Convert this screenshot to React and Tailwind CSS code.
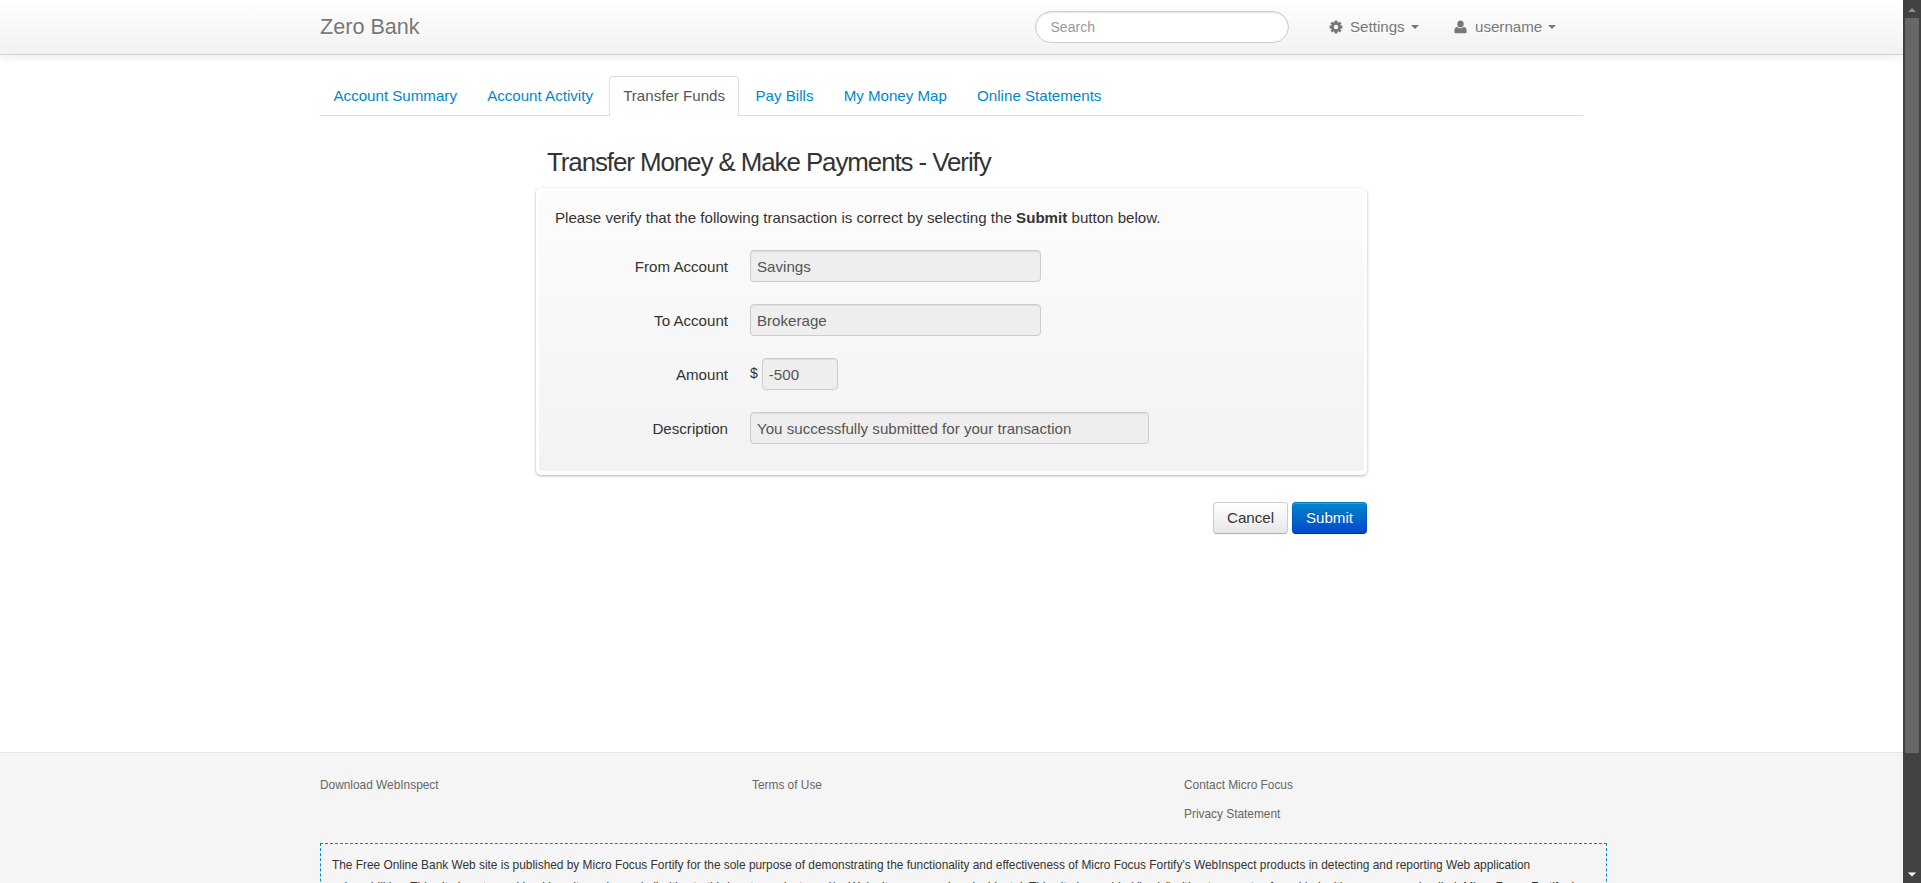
import React from "react";

const tabs = ["Account Summary", "Account Activity", "Transfer Funds", "Pay Bills", "My Money Map", "Online Statements"];

const toothAngles = [0, 45, 90, 135];

function Cog() {
  return (
    <svg className="h-[14px] w-[14px]" viewBox="0 0 14 14" fill="none">
      {toothAngles.map((a) => (
        <rect key={a} x="5.550" y="0.500" width="2.900" height="13" rx="0.400" fill="#777" transform={`rotate(${a} 7 7)`} />
      ))}
      <circle cx="7" cy="7" r="4.900" fill="#777" />
      <circle cx="7" cy="7" r="2.200" fill="#f8f8f8" />
    </svg>
  );
}

function User() {
  return (
    <svg className="h-[14px] w-[13px]" viewBox="0 0 13 14" fill="#777">
      <ellipse cx="6.500" cy="4" rx="3.200" ry="3.500" />
      <path d="M3.300 6.900C1.400 7.200 0.500 8.200 0.400 10.200v1.600c0 1 .5 1.500 1.400 1.500h9.400c.9 0 1.400-.5 1.400-1.500v-1.600c-.1-2-1-3-2.900-3.300C8.900 7.800 7.800 8.300 6.500 8.300S4.100 7.800 3.300 6.900z" />
    </svg>
  );
}

function Caret() {
  return <span className="block h-0 w-0 border-x-[4px] border-t-[4px] border-x-transparent border-t-[#777]" />;
}

function Row({ label, children }) {
  return (
    <div className="flex h-8 items-center">
      <label className="mr-[22px] w-[173px] pt-[2px] text-right">{label}</label>
      {children}
    </div>
  );
}

const inputClass =
  "h-8 rounded-[4px] border border-[#ccc] bg-[#eee] px-[6px] text-[#555] shadow-[inset_0_1px_1px_rgba(0,0,0,0.075)] outline-none";

export default function App() {
  return (
    <div className="flex h-[883px] w-[1921px] overflow-hidden bg-white font-['Liberation_Sans',Arial,sans-serif] text-[15.120px] leading-[22px] text-[#333]">
      <div className="flex w-[1903px] flex-col">
        <header className="relative h-[55px] shrink-0 border-b border-[#d4d4d4] bg-linear-to-b from-white to-[#f2f2f2] shadow-[0_1px_10px_rgba(0,0,0,0.1)]">
          <div className="mx-auto flex h-[54px] w-[1263px] items-center text-[#777] [text-shadow:0_1px_0_#fff]">
            <a className="text-[21.600px]">Zero Bank</a>
            <input
              placeholder="Search"
              className="ml-auto h-8 w-[254px] rounded-[16px] border border-[#ccc] bg-white px-[14.500px] text-[14.040px] shadow-[inset_0_1px_2px_rgba(0,0,0,0.1)] outline-none placeholder:text-[#999]"
            />
            <div className="ml-[40px] flex w-[125px] items-center">
              <Cog />
              <span className="ml-[7px] mr-[6px]">Settings</span>
              <Caret />
            </div>
            <div className="flex w-[129px] items-center">
              <User />
              <span className="ml-[8px] mr-[6px]">username</span>
              <Caret />
            </div>
          </div>
        </header>

        <main className="flex h-[697px] shrink-0 flex-col">
          <nav className="mx-auto mt-[21px] flex h-[40px] w-[1263px] border-b border-[#ddd] text-[#0088cc]">
            {tabs.map((t) =>
              t === "Transfer Funds" ? (
                <a key={t} className="mr-[2.500px] h-[40px] rounded-t-[4px] border border-b-0 border-[#ddd] bg-white px-[13px] pt-[8px] text-[#555]">
                  {t}
                </a>
              ) : (
                <a key={t} className="mr-[2.200px] px-[14px] pt-[9px] first:pl-[13.500px]">
                  {t}
                </a>
              )
            )}
          </nav>

          <section className="mx-auto mt-[27px] w-[831px]">
            <h2 className="h-[45px] pl-[11px] text-[25.920px] leading-[38px] tracking-[-1.080px]">
              Transfer Money &amp; Make Payments - Verify
            </h2>
            <div className="h-[287px] rounded-[5px] bg-white px-[3px] pt-[3px] pb-[4px] shadow-[0_1px_3px_rgba(0,0,0,0.3)]">
              <div className="flex h-full flex-col rounded-[3px] bg-linear-to-b from-[#fcfcfc] to-[#f2f2f2] px-[16px] pt-[16px]">
                <p>
                  Please verify that the following transaction is correct by selecting the <strong>Submit</strong> button below.
                </p>
                <div className="mt-[21px] flex flex-col gap-[22px]">
                  <Row label="From Account">
                    <input readOnly value="Savings" className={`${inputClass} w-[291px]`} />
                  </Row>
                  <Row label="To Account">
                    <input readOnly value="Brokerage" className={`${inputClass} w-[291px]`} />
                  </Row>
                  <Row label="Amount">
                    <span className="mr-[4px] pb-[2px] text-[14.040px]">$</span>
                    <input readOnly value="-500" className={`${inputClass} w-[76px]`} />
                  </Row>
                  <Row label="Description">
                    <input readOnly value="You successfully submitted for your transaction" className={`${inputClass} w-[399px]`} />
                  </Row>
                </div>
              </div>
            </div>
            <div className="mt-[27px] flex justify-end gap-[4px]">
              <button className="h-8 w-[75px] rounded-[4px] border border-[#ccc] border-b-[#b3b3b3] bg-linear-to-b from-white to-[#e6e6e6] shadow-[inset_0_1px_0_rgba(255,255,255,0.2),0_1px_2px_rgba(0,0,0,0.05)] [text-shadow:0_1px_1px_rgba(255,255,255,0.75)]">
                Cancel
              </button>
              <button className="h-8 w-[75px] rounded-[4px] border border-black/10 border-b-black/25 bg-linear-to-b from-[#0088cc] to-[#0044cc] bg-origin-border text-white shadow-[inset_0_1px_0_rgba(255,255,255,0.2),0_1px_2px_rgba(0,0,0,0.05)] [text-shadow:0_-1px_0_rgba(0,0,0,0.25)]">
                Submit
              </button>
            </div>
          </section>
        </main>

        <footer className="h-[131px] shrink-0 overflow-hidden border-t border-[#e5e5e5] bg-[#f5f5f5] text-[11.880px]">
          <div className="mx-auto w-[1263px]">
            <div className="flex h-[90px] pt-[21px] text-[#666]">
              <div className="w-[432px]">Download WebInspect</div>
              <div className="w-[432px]">Terms of Use</div>
              <div className="flex flex-col gap-[7px]">
                <span>Contact Micro Focus</span>
                <span>Privacy Statement</span>
              </div>
            </div>
            <div className="h-[120px] w-[1287px] border border-dashed border-[#0088cc] px-[11px] pt-[11px] leading-[21.600px]">
              The Free Online Bank Web site is published by Micro Focus Fortify for the sole purpose of demonstrating the functionality and effectiveness of Micro Focus Fortify’s WebInspect products in detecting and reporting Web application
              vulnerabilities. This site is not a real banking site and any similarities to third party products and/or Web sites are purely coincidental. This site is provided "as is" without warranty of any kind, either express or implied. Micro Focus Fortify does not assume any risk in relation to your use of this Web site.
            </div>
          </div>
        </footer>
      </div>

      <div className="flex w-[18px] shrink-0 flex-col items-center bg-[#424242]">
        <svg className="h-[18px] w-[18px]" viewBox="0 0 18 18">
          <path d="M9 8l4 4H5z" fill="#8c8c8c" />
        </svg>
        <div className="h-[735px] w-[14px] bg-[#686868]" />
        <svg className="mt-auto h-[18px] w-[18px]" viewBox="0 0 18 18">
          <path d="M9 11.500l4-4H5z" fill="#fff" />
        </svg>
      </div>
    </div>
  );
}
